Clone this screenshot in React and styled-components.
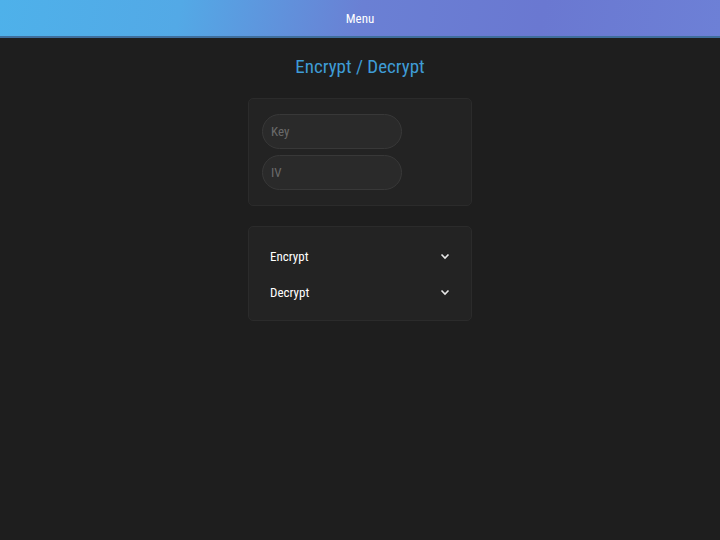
import React from "react";
import styled, { createGlobalStyle } from "styled-components";

const GlobalStyle = createGlobalStyle`
  html, body {
    margin: 0;
    padding: 0;
    background: #1e1e1e;
    font-family: Roboto, "Noto Sans", sans-serif;
    font-stretch: condensed;
  }
`;

const Page = styled.div`
  min-height: 540px;
  background: #1e1e1e;
`;

const Header = styled.header`
  height: 36px;
  display: flex;
  align-items: center;
  justify-content: center;
  background: linear-gradient(100deg, #4eb1ea 0%, #53a9e6 25%, #6a80d4 50%, #6a78d1 75%, #6d80d6 100%);
  border-bottom: 2px solid #3f6e9c;
  color: #ffffff;
  font-size: 13px;
`;

const Main = styled.main`
  display: flex;
  flex-direction: column;
  align-items: center;
`;

const Title = styled.h1`
  margin: 16px 0 18px;
  font-size: 19px;
  font-weight: 400;
  color: #3e9cd6;
  line-height: 26px;
`;

const Card = styled.section`
  box-sizing: border-box;
  width: 224px;
  background: #232323;
  border: 1px solid #2b2b2b;
  border-radius: 5px;
  padding: ${(p) => p.$pad};
  margin-bottom: 20px;
  display: flex;
  flex-direction: column;
  gap: ${(p) => p.$gap || "0"};
`;

const Input = styled.input`
  box-sizing: border-box;
  width: 140px;
  height: 35px;
  border-radius: 18px;
  border: 1px solid #383838;
  background: #2a2a2a;
  padding: 0 8px;
  color: #ddd;
  font-family: inherit;
  font-stretch: condensed;
  font-size: 13px;
  outline: none;
  &::placeholder {
    color: #6a6a6a;
  }
`;

const Row = styled.div`
  height: 36px;
  display: flex;
  align-items: center;
  justify-content: space-between;
  color: #ffffff;
  font-size: 13px;
`;

const Chevron = () => (
  <svg width="10" height="7" viewBox="0 0 10 7">
    <path d="M1.5 1.5 L5 5 L8.5 1.5" fill="none" stroke="#e8e8e8" strokeWidth="1.6" />
  </svg>
);

export default function App() {
  return (
    <Page>
      <GlobalStyle />
      <Header>Menu</Header>
      <Main>
        <Title>Encrypt / Decrypt</Title>
        <Card $pad="15px 13px 15px" $gap="6px">
          <Input placeholder="Key" />
          <Input placeholder="IV" />
        </Card>
        <Card $pad="11px 21px 10px 21px">
          <Row>
            Encrypt
            <Chevron />
          </Row>
          <Row>
            Decrypt
            <Chevron />
          </Row>
        </Card>
      </Main>
    </Page>
  );
}
